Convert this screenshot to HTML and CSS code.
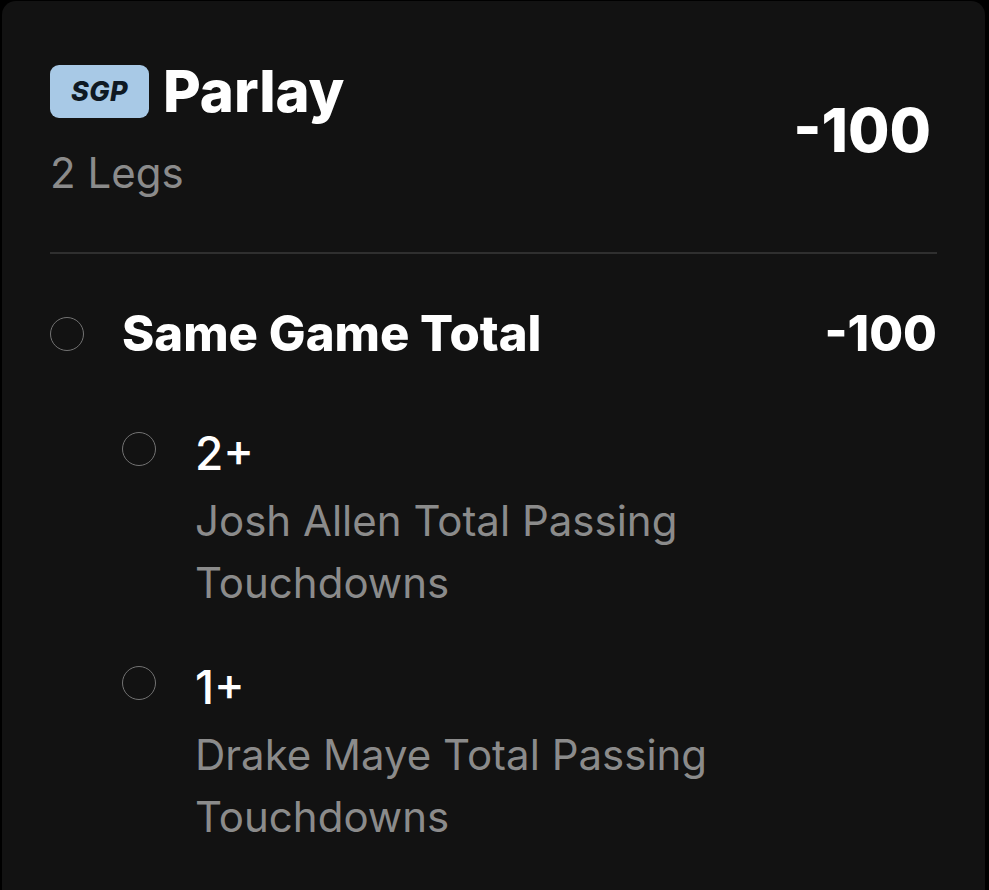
FILE: index.html
```html
<!DOCTYPE html>
<html lang="en">
<head>
<meta charset="utf-8">
<title>SGP Parlay</title>
<link rel="stylesheet" href="styles.css">
</head>
<body>
<div class="card">
  <div class="header">
    <div class="header-main">
      <div class="title-row">
        <span class="badge">SGP</span>
        <span class="title">Parlay</span>
      </div>
      <div class="legs">2 Legs</div>
    </div>
    <div class="odds-big">-100</div>
  </div>
  <div class="divider"></div>
  <div class="group">
    <div class="group-row">
      <span class="radio"></span>
      <span class="group-title">Same Game Total</span>
      <span class="group-odds">-100</span>
    </div>
    <div class="legs-list">
      <div class="leg">
        <span class="radio"></span>
        <div class="leg-text">
          <div class="leg-value">2+</div>
          <div class="leg-desc">Josh Allen Total Passing<br>Touchdowns</div>
        </div>
      </div>
      <div class="leg">
        <span class="radio"></span>
        <div class="leg-text">
          <div class="leg-value">1+</div>
          <div class="leg-desc">Drake Maye Total Passing<br>Touchdowns</div>
        </div>
      </div>
    </div>
  </div>
</div>
</body>
</html>
```

FILE: styles.css
```css
html, body {
  margin: 0;
  padding: 0;
  background: #000;
  height: 100%;
  overflow: hidden;
}
body {
  font-family: Inter, "Noto Sans", sans-serif;
  color: #fff;
}
.card {
  margin: 1px 4px 0 2px;
  background: #121212;
  border-radius: 14px 14px 0 0;
  padding: 62px 48px 0 48px;
  height: 1000px;
  box-sizing: border-box;
}
.header {
  display: flex;
  justify-content: space-between;
  align-items: center;
}
.title-row {
  display: flex;
  align-items: center;
  gap: 14px;
}
.badge {
  display: inline-flex;
  align-items: center;
  justify-content: center;
  width: 99px;
  height: 53px;
  border-radius: 9px;
  background: #a8c9e6;
  color: #0f1923;
  font-size: 27px;
  font-weight: 800;
  font-style: italic;
  letter-spacing: 0.5px;
}
.title {
  font-size: 58px;
  font-weight: 800;
  line-height: 57px;
}
.legs {
  margin-top: 30px;
  font-size: 42px;
  line-height: 46px;
  color: #8b8b8b;
}
.odds-big {
  font-size: 60px;
  font-weight: 800;
  margin-right: 6px;
}
.divider {
  margin-top: 56px;
  height: 2px;
  background: #2f2f2f;
}
.group {
  padding-top: 50px;
}
.group-row {
  display: flex;
  align-items: center;
}
.radio {
  flex: none;
  width: 32px;
  height: 32px;
  border: 1.5px solid #727272;
  border-radius: 50%;
}
.group-title {
  margin-left: 38px;
  font-size: 49px;
  font-weight: 800;
  flex: 1;
}
.group-odds {
  font-size: 49px;
  font-weight: 800;
}
.legs-list {
  padding-left: 72px;
  padding-top: 69px;
  display: flex;
  flex-direction: column;
  gap: 52px;
}
.leg {
  display: flex;
  align-items: flex-start;
}
.leg-text {
  margin-left: 39px;
  margin-top: -2px;
}
.leg-value {
  font-size: 46px;
  font-weight: 500;
  line-height: 46px;
}
.leg-desc {
  margin-top: 14px;
  font-size: 42px;
  line-height: 62px;
  color: #8b8b8b;
}
```
